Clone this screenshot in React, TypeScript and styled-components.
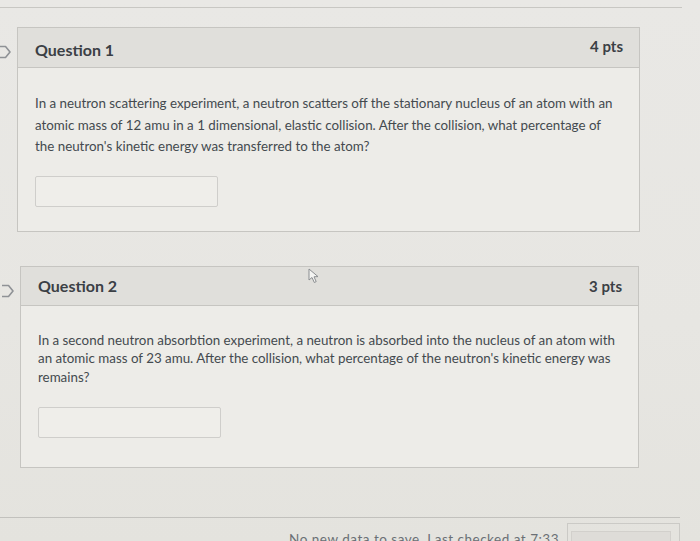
import React from 'react';
import styled, { createGlobalStyle } from 'styled-components';

const GlobalStyle = createGlobalStyle`
  html, body {
    margin: 0;
    padding: 0;
    background: #e6e5e1;
  }
  body {
    font-family: Lato, "Open Sans", "Liberation Sans", sans-serif;
    color: #41464b;
  }
`;

const Page = styled.div`
  width: 700px;
  height: 541px;
  overflow: hidden;
  position: relative;
  box-sizing: border-box;
  padding-top: 7px;
  display: flex;
  flex-direction: column;
  background: linear-gradient(180deg, #e9e8e5 0%, #e7e6e2 60%, #e4e3de 100%);
`;

const TopRule = styled.div`
  height: 0;
  border-top: 1px solid #c8c7c3;
  margin-right: 18px;
`;

const QuizColumn = styled.div`
  display: flex;
  flex-direction: column;
  gap: 34px;
  padding-top: 19px;
  padding-left: 17px;
`;

const Card = styled.div<{ $shift: number; $width: number }>`
  position: relative;
  margin-left: ${(p) => p.$shift}px;
  width: ${(p) => p.$width}px;
  border: 1px solid #c6c5c1;
  background: #edece8;
  box-sizing: border-box;
`;

const Header = styled.div<{ $height: number }>`
  height: ${(p) => p.$height}px;
  display: flex;
  align-items: center;
  justify-content: space-between;
  padding: 0 16px 0 17px;
  background: #e0dfdb;
  border-bottom: 1px solid #c6c5c1;
`;

const Title = styled.h2<{ $drop: number }>`
  margin: ${(p) => p.$drop}px 0 0;
  font-size: 16px;
  font-weight: 700;
  color: #3b4045;
`;

const Points = styled.span<{ $lift: number }>`
  font-size: 15px;
  font-weight: 700;
  color: #3b4045;
  margin-bottom: ${(p) => p.$lift}px;
`;

const Body = styled.div<{ $top: number; $bottom: number }>`
  padding: ${(p) => p.$top}px 16px ${(p) => p.$bottom}px 17px;
  display: flex;
  flex-direction: column;
`;

const Prompt = styled.p<{ $lh: number }>`
  margin: 0;
  font-size: 13.35px;
  line-height: ${(p) => p.$lh}px;
  color: #444a4f;
`;

const Answer = styled.input<{ $gap: number }>`
  margin-top: ${(p) => p.$gap}px;
  width: 183px;
  height: 31px;
  box-sizing: border-box;
  border: 1px solid #cfcecb;
  border-radius: 2px;
  background: #efeeea;
  outline: none;
`;

const Flag = styled.svg`
  position: absolute;
  left: -19px;
  top: 17px;
  width: 14px;
  height: 14px;
`;

const Cursor = styled.svg`
  position: absolute;
  left: 287px;
  top: 1px;
  width: 12px;
  height: 16px;
`;

const Footer = styled.div`
  margin-top: auto;
  border-top: 1px solid #c2c1bd;
  margin-right: 20px;
  height: 23px;
  display: flex;
  align-items: flex-start;
  justify-content: flex-end;
  gap: 8px;
`;

const SaveNote = styled.span`
  margin-top: 13px;
  font-size: 13.5px;
  color: #6b7075;
  letter-spacing: 0.5px;
`;

const ButtonBox = styled.div`
  width: 113px;
  height: 30px;
  margin-top: 5px;
  box-sizing: border-box;
  border: 1px solid #cbcac6;
  border-bottom: none;
  padding: 7px 8px 0 3px;
`;

const SubmitButton = styled.div`
  height: 20px;
  background: #dedcd8;
  border: 1px solid #d2d0cc;
`;

function FlagIcon() {
  return (
    <Flag viewBox="0 0 14 14">
      <path d="M-2 1.5 H6.5 L11 7 L6.5 12.5 H-2" fill="none" stroke="#8f9296" strokeWidth="1.6" strokeLinejoin="round" />
    </Flag>
  );
}

interface Question {
  title: string;
  points: string;
  text: string;
  shift: number;
  width: number;
  headerHeight: number;
  titleDrop: number;
  pointsLift: number;
  lineHeight: number;
  top: number;
  gap: number;
  bottom: number;
}

const questions: Question[] = [
  {
    title: 'Question 1',
    points: '4 pts',
    text:
      "In a neutron scattering experiment, a neutron scatters off the stationary nucleus of an atom with an atomic mass of 12 amu in a 1 dimensional, elastic collision. After the collision, what percentage of the neutron's kinetic energy was transferred to the atom?",
    shift: 0,
    width: 623,
    headerHeight: 39,
    titleDrop: 4,
    pointsLift: 3,
    lineHeight: 21.5,
    top: 25,
    gap: 18,
    bottom: 24,
  },
  {
    title: 'Question 2',
    points: '3 pts',
    text:
      "In a second neutron absorbtion experiment, a neutron is absorbed into the nucleus of an atom with an atomic mass of 23 amu. After the collision, what percentage of the neutron's kinetic energy was remains?",
    shift: 3,
    width: 619,
    headerHeight: 38,
    titleDrop: 0,
    pointsLift: 0,
    lineHeight: 18.5,
    top: 25,
    gap: 21,
    bottom: 29,
  },
];

export default function App() {
  return (
    <>
      <GlobalStyle />
      <Page>
        <TopRule />
        <QuizColumn>
          {questions.map((q, index) => (
            <Card key={index} $shift={q.shift} $width={q.width}>
              <FlagIcon />
              {index === 1 && (
                <Cursor viewBox="0 0 12 16">
                  <path d="M1 1 L1 12 L4 9.5 L6.3 14.5 L8.2 13.6 L6 8.8 L10 8.6 Z" fill="#f4f4f2" stroke="#8a8d90" strokeWidth="1" strokeLinejoin="round" />
                </Cursor>
              )}
              <Header $height={q.headerHeight}>
                <Title $drop={q.titleDrop}>{q.title}</Title>
                <Points $lift={q.pointsLift}>{q.points}</Points>
              </Header>
              <Body $top={q.top} $bottom={q.bottom}>
                <Prompt $lh={q.lineHeight}>{q.text}</Prompt>
                <Answer type="text" $gap={q.gap} />
              </Body>
            </Card>
          ))}
        </QuizColumn>
        <Footer>
          <SaveNote>No new data to save. Last checked at 7:33</SaveNote>
          <ButtonBox>
            <SubmitButton />
          </ButtonBox>
        </Footer>
      </Page>
    </>
  );
}
